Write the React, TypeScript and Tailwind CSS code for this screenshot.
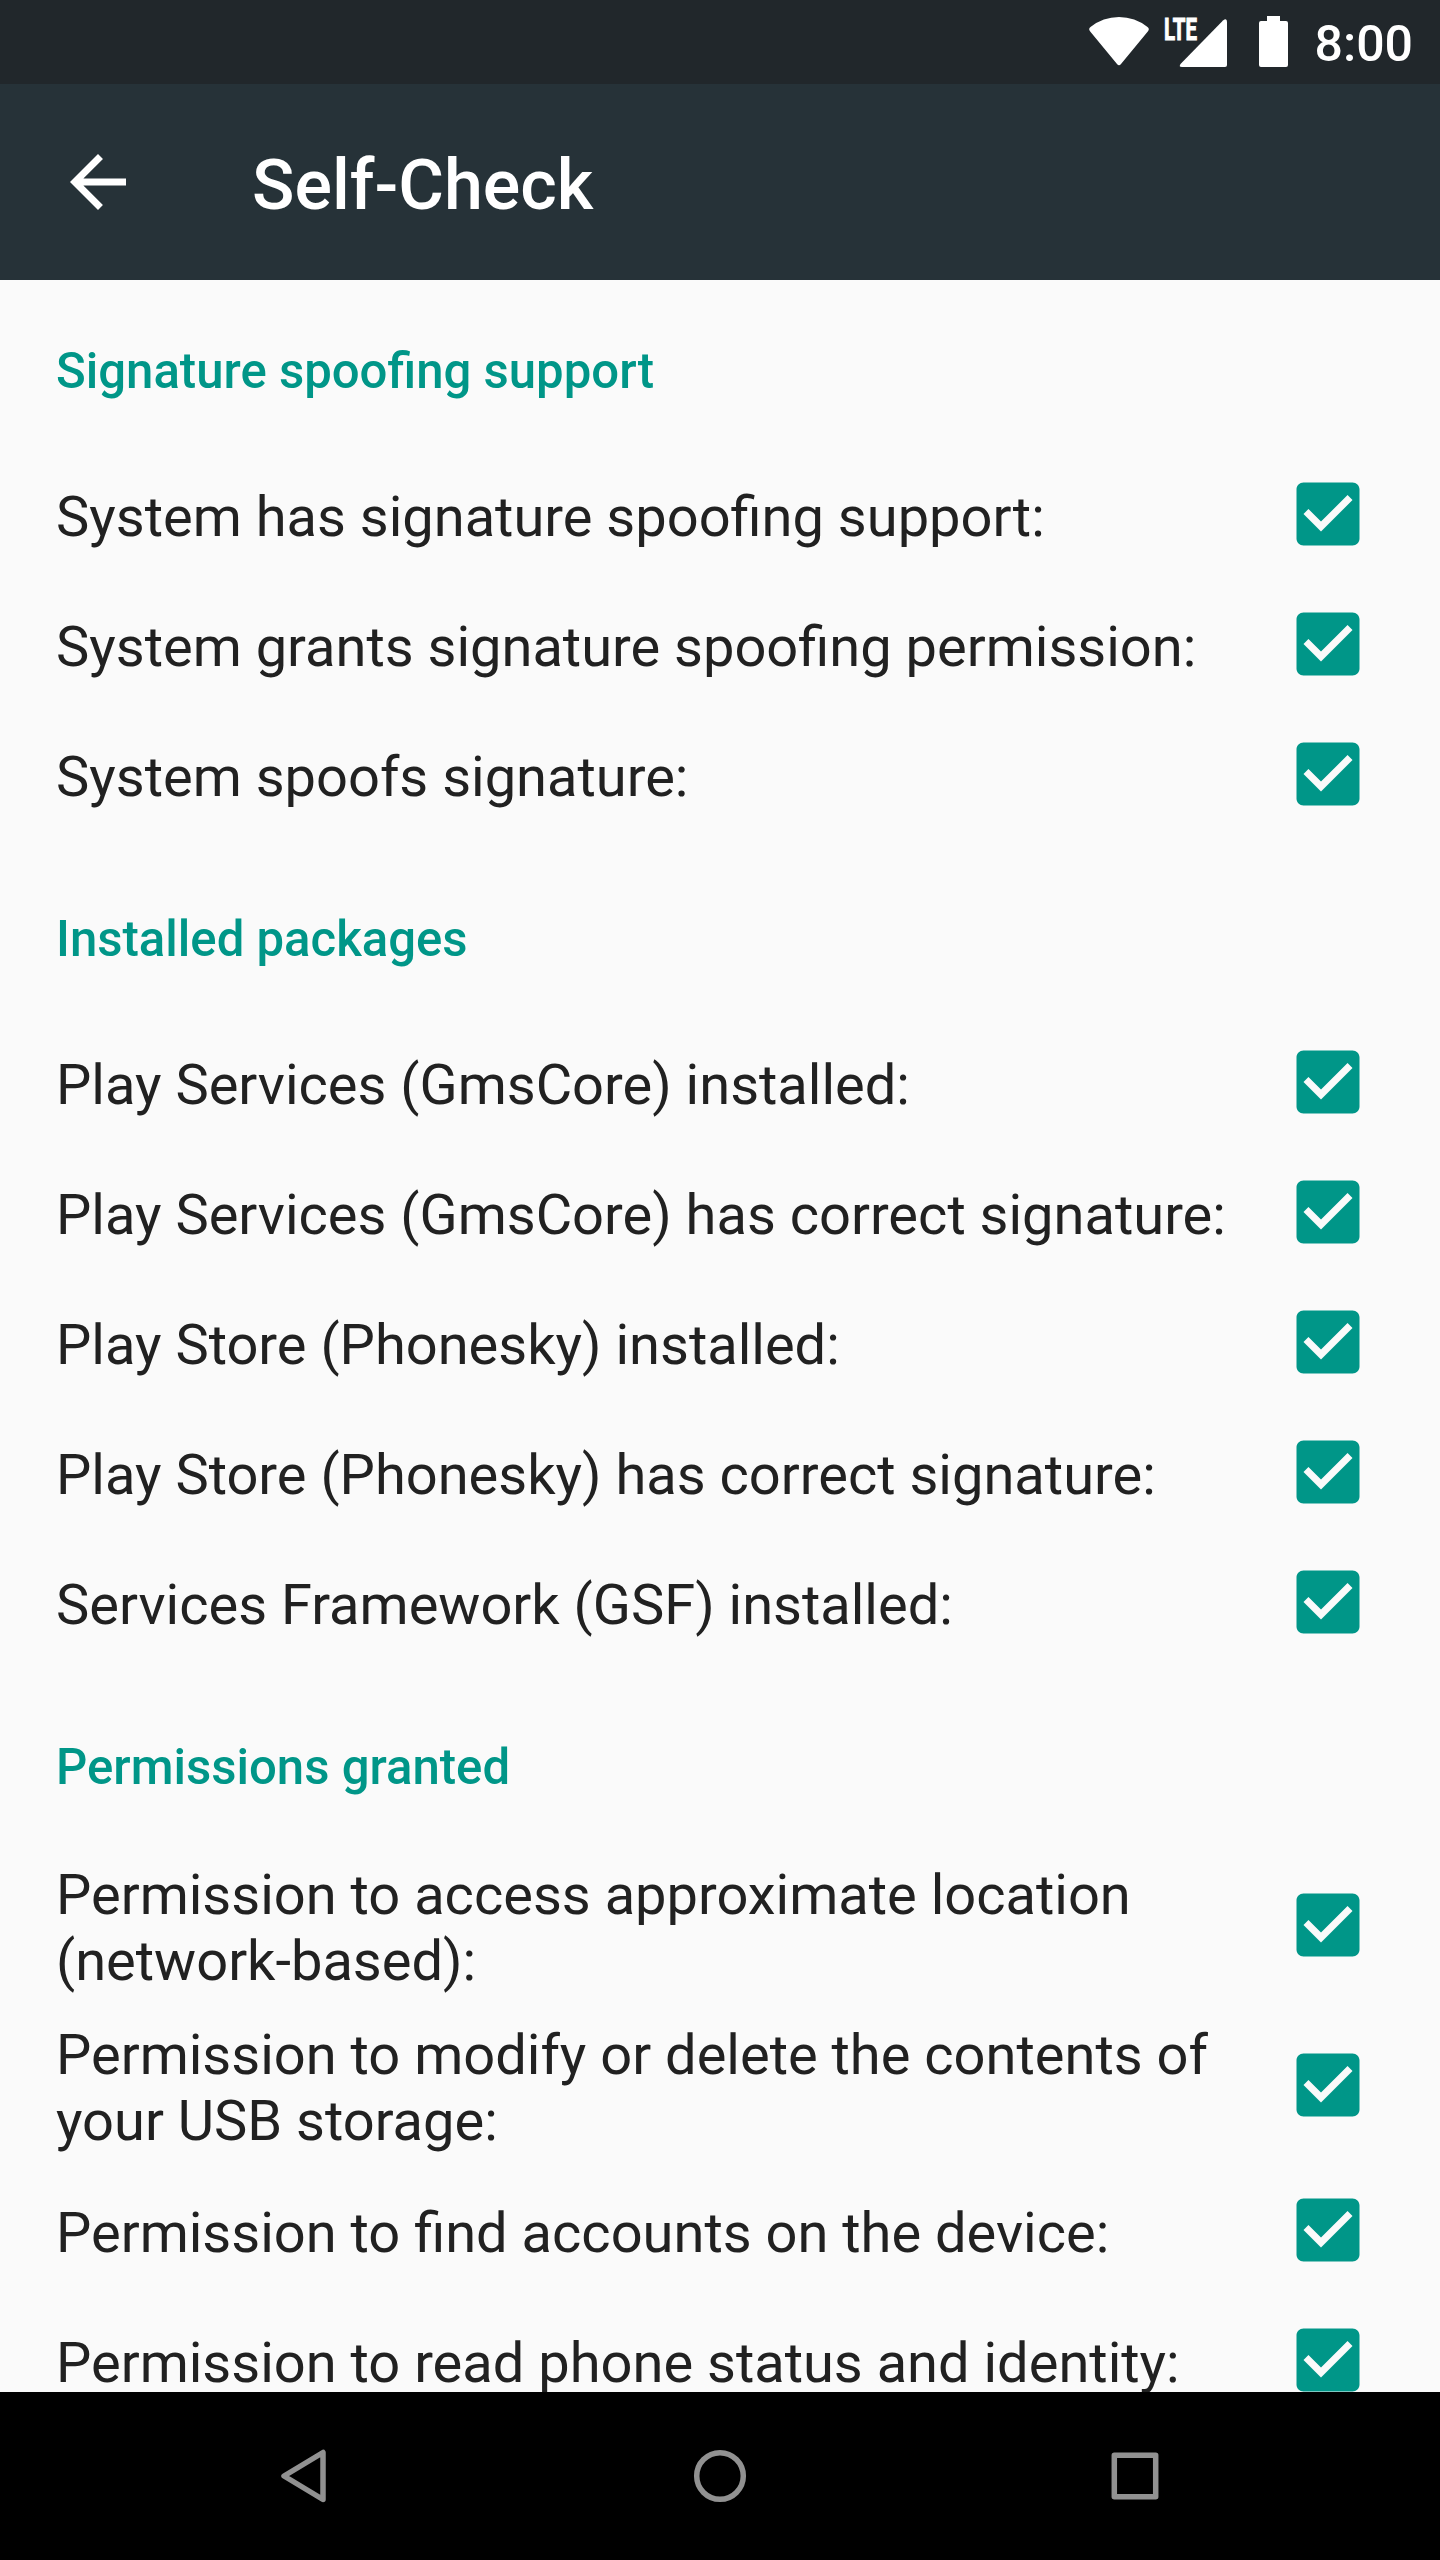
import React from 'react';

type Item = { label: string; tall?: boolean };

const sections: { title: string; items: Item[] }[] = [
  {
    title: 'Signature spoofing support',
    items: [
      { label: 'System has signature spoofing support:' },
      { label: 'System grants signature spoofing permission:' },
      { label: 'System spoofs signature:' },
    ],
  },
  {
    title: 'Installed packages',
    items: [
      { label: 'Play Services (GmsCore) installed:' },
      { label: 'Play Services (GmsCore) has correct signature:' },
      { label: 'Play Store (Phonesky) installed:' },
      { label: 'Play Store (Phonesky) has correct signature:' },
      { label: 'Services Framework (GSF) installed:' },
    ],
  },
  {
    title: 'Permissions granted',
    items: [
      { label: 'Permission to access approximate location (network-based):', tall: true },
      { label: 'Permission to modify or delete the contents of your USB storage:', tall: true },
      { label: 'Permission to find accounts on the device:' },
      { label: 'Permission to read phone status and identity:' },
    ],
  },
];

function Check() {
  return (
    <svg className="size-[84px] shrink-0" viewBox="0 0 24 24" fill="#009688">
      <path d="M19 3H5c-1.11 0-2 .9-2 2v14c0 1.1.89 2 2 2h14c1.11 0 2-.9 2-2V5c0-1.1-.89-2-2-2zm-9 14l-5-5 1.41-1.41L10 14.17l7.59-7.59L19 8l-9 9z" />
    </svg>
  );
}

function Row({ label, tall }: Item) {
  return (
    <li className={`flex shrink-0 items-center justify-between pr-[70px] ${tall ? 'h-[160px]' : 'h-[130px]'}`}>
      <span className="w-[1200px] pt-[5px] text-[56px] leading-[66px] text-[#212121]">{label}</span>
      <Check />
    </li>
  );
}

export default function App() {
  return (
    <div className="flex h-[2560px] w-[1440px] flex-col overflow-hidden bg-[#fafafa] font-['Roboto',sans-serif]">
      <div className="flex h-[84px] shrink-0 items-center justify-end bg-[#21272b] pr-[27px] text-white">
        <svg className="h-[84px] w-[60px]" viewBox="0 0 60 84">
          <path d="M1.2 31.5Q-1 29 1.5 27Q14 17 30 17T58.5 27Q61 29 58.8 31.5L32 64Q30 66.500 28 64Z" fill="white" />
        </svg>
        <svg className="ml-[15px] h-[84px] w-[64px]" viewBox="0 0 64 84" fill="white">
          <path d="M59 20.500Q63 17.500 63 22V65Q63 67 61 67H18Q14 67 17 63.500Z" />
          <text x="0" y="40" fontSize="31" fontWeight="700" textLength="33" lengthAdjust="spacingAndGlyphs" stroke="white" strokeWidth="1">LTE</text>
        </svg>
        <svg className="ml-[31px] h-[84px] w-[29px]" viewBox="0 0 29 84" fill="white">
          <path d="M8 16H21V21H27Q29 21 29 23V65Q29 67 27 67H2Q0 67 0 65V23Q0 21 2 21H8Z" />
        </svg>
        <span className="ml-[27px] pt-[4px] text-[50px] font-medium leading-none">8:00</span>
      </div>
      <header className="flex h-[196px] shrink-0 items-center bg-[#263238] pl-[56px] text-white">
        <svg className="size-[84px]" viewBox="0 0 24 24" fill="white">
          <path d="M20 11H7.830l5.590-5.590L12 4l-8 8 8 8 1.410-1.410L7.830 13H20v-2z" />
        </svg>
        <h1 className="ml-[112px] pt-[5px] text-[70px] font-medium leading-none">Self-Check</h1>
      </header>
      <main className="flex h-[2112px] shrink-0 flex-col gap-[24px] overflow-hidden pl-[56px] pt-[15px]">
        {sections.map((section) => (
          <section key={section.title} className="shrink-0">
            <h2 className="flex h-[154px] items-center text-[49.1px] font-medium text-[#009688]">{section.title}</h2>
            <ul>
              {section.items.map((item) => (
                <Row key={item.label} {...item} />
              ))}
            </ul>
          </section>
        ))}
      </main>
      <nav className="flex h-[168px] shrink-0 items-center justify-center gap-[332px] bg-black">
        <svg className="size-[84px]" viewBox="0 0 84 84" fill="none" stroke="#919191" strokeWidth="5.5" strokeLinejoin="round">
          <path d="M22 42L61 18.500V65.500Z" />
        </svg>
        <svg className="size-[84px]" viewBox="0 0 84 84" fill="none" stroke="#919191" strokeWidth="5.5">
          <circle cx="42" cy="42" r="23.300" />
        </svg>
        <svg className="size-[84px]" viewBox="0 0 84 84" fill="none" stroke="#919191" strokeWidth="5.5" strokeLinejoin="round">
          <rect x="20.300" y="21.300" width="41.400" height="41.400" />
        </svg>
      </nav>
    </div>
  );
}
